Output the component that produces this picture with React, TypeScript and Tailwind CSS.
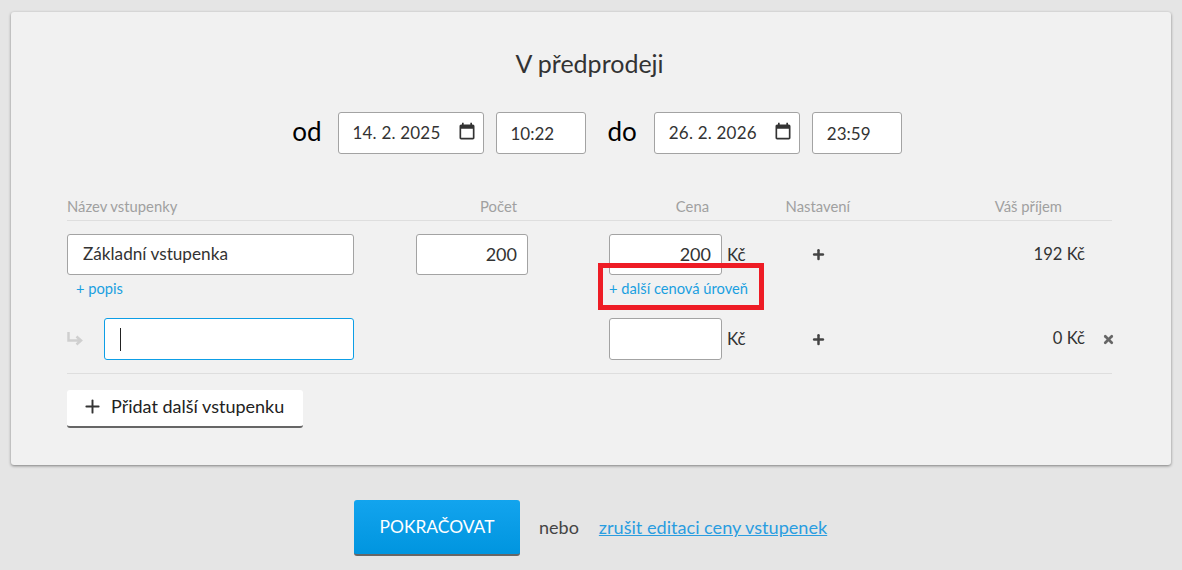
import { Plus, X } from 'lucide-react';

const inputCls =
  'rounded-[3px] border border-[#a3a3a3] bg-white text-[#333] outline-none';

function CalendarIcon() {
  return (
    <svg viewBox="0 0 24 24" className="h-[20px] w-[20px] fill-[#333]">
      <path d="M19 3h-1V1h-2v2H8V1H6v2H5c-1.11 0-1.99.9-1.99 2L3 19c0 1.1.89 2 2 2h14c1.1 0 2-.9 2-2V5c0-1.1-.9-2-2-2zm0 16H5V8h14v11z" />
    </svg>
  );
}

function DateField({ value }: { value: string }) {
  return (
    <div className={`${inputCls} flex h-[42px] w-[146px] shrink-0 items-center justify-between pl-[14px] pr-[6px] text-[17px] tracking-[0.2px]`}>
      <span>{value}</span>
      <span className="mb-[3px]">
        <CalendarIcon />
      </span>
    </div>
  );
}

function TimeField({ value }: { value: string }) {
  return <input readOnly value={value} className={`${inputCls} h-[42px] w-[90px] pl-[14px] text-[17px]`} />;
}

function SettingsPlus() {
  return <Plus className="h-[15px] w-[15px] text-[#444]" strokeWidth={4} />;
}

export default function App() {
  return (
    <div className="h-[570px] overflow-hidden bg-[#e5e5e5] px-[11px] pt-[12px] font-['Lato','Liberation_Sans',sans-serif] text-[#333]">
      <div className="h-[453px] rounded-[3px] bg-[#f1f1f1] pl-[56px] pr-[59px] pt-[35px] shadow-[0_1px_3px_rgba(0,0,0,0.45)]">
        <h1 className="text-center text-[25px] leading-[32px] text-[#333]">V předprodeji</h1>

        {/* datumy */}
        <div className="mt-[33px] flex h-[42px] items-center justify-center pl-[15px]">
          <span className="mb-[4px] mr-[16px] text-[26px] text-black">od</span>
          <DateField value="14. 2. 2025" />
          <div className="ml-[12px]">
            <TimeField value="10:22" />
          </div>
          <span className="mb-[4px] ml-[22px] mr-[17px] text-[26px] text-black">do</span>
          <DateField value="26. 2. 2026" />
          <div className="ml-[12px]">
            <TimeField value="23:59" />
          </div>
        </div>

        {/* hlavicka */}
        <div className="mt-[43px] flex h-[24px] items-start border-b border-[#dedede] text-[14.8px] leading-[18px] text-[#a0a0a0]">
          <span className="w-[349px]">Název vstupenky</span>
          <span className="w-[101px] text-right">Počet</span>
          <span className="w-[192px] text-right">Cena</span>
          <span className="w-[141px] text-right">Nastavení</span>
          <span className="w-[212px] text-right">Váš příjem</span>
        </div>

        {/* radek 1 */}
        <div className="mt-[13px] flex h-[41px] items-center">
          <input
            readOnly
            value="Základní vstupenka"
            className={`${inputCls} h-[41px] w-[287px] shrink-0 pb-[3px] pl-[15px] text-[17.2px]`}
          />
          <input
            readOnly
            value="200"
            className={`${inputCls} ml-[62px] h-[41px] w-[112px] shrink-0 pb-[2px] pr-[10px] text-right text-[18px]`}
          />
          <input
            readOnly
            value="200"
            className={`${inputCls} ml-[81px] h-[41px] w-[113px] shrink-0 pb-[2px] pr-[10px] text-right text-[18px]`}
          />
          <span className="ml-[5px] w-[20px] shrink-0 text-[17px]">Kč</span>
          <div className="ml-[64px] w-[15px] shrink-0">
            <SettingsPlus />
          </div>
          <span className="w-[259px] shrink-0 pb-[1px] text-right text-[16.6px]">192 Kč</span>
        </div>
        <div className="mt-[4px] flex h-[18px] items-center text-[14.7px] leading-[18px] text-[#1a9fe0]">
          <a className="ml-[9px] w-[533px]">+ popis</a>
          <a>+ další cenová úroveň</a>
        </div>

        {/* radek 2 */}
        <div className="mt-[21px] flex h-[42px] items-center">
          <svg viewBox="0 0 16 14" className="h-[14px] w-[16px] shrink-0 fill-none stroke-[#cfcfcf] stroke-[2.5]">
            <path d="M1.5 0v8.5h11M9.5 4.5l4.5 4-4.5 4" />
          </svg>
          <div className="ml-[21px] flex h-[42px] w-[250px] shrink-0 items-center rounded-[3px] border border-[#0d9ee6] bg-white pl-[15px]">
            <div className="h-[23px] w-px bg-[#222]" />
          </div>
          <input readOnly className={`${inputCls} ml-[255px] h-[42px] w-[113px] shrink-0`} />
          <span className="ml-[5px] w-[20px] shrink-0 text-[17px]">Kč</span>
          <div className="ml-[64px] w-[15px] shrink-0">
            <SettingsPlus />
          </div>
          <span className="w-[259px] shrink-0 pb-[1px] text-right text-[16.6px]">0 Kč</span>
          <X className="ml-[17px] h-[13px] w-[13px] shrink-0 text-[#666]" strokeWidth={5} />
        </div>

        <div className="mt-[13px] border-t border-[#dedede] pt-[16px]">
          <button className="flex h-[38px] w-[236px] items-center rounded-[3px] border-b-2 border-[#666] bg-white pb-[3px] pl-[15px] text-[18px] text-[#222]">
            <Plus className="mr-[8px] h-[21px] w-[21px] text-[#333]" strokeWidth={2.2} />
            Přidat další vstupenku
          </button>
        </div>
      </div>

      {/* akce */}
      <div className="mt-[35px] flex items-center pl-[343px] text-[18px]">
        <button className="h-[56px] w-[166px] rounded-[3px] border-b-2 border-[#666] bg-gradient-to-b from-[#12a4ee] to-[#0095df] text-[17.4px] text-white">
          POKRAČOVAT
        </button>
        <span className="ml-[19px] pb-[1px] text-[#444]">nebo</span>
        <a className="ml-[20px] pb-[1px] text-[18.1px] text-[#2a9de0] underline">zrušit editaci ceny vstupenek</a>
      </div>

      {/* cervene zvyrazneni */}
      <div className="absolute left-[598px] top-[263px] h-[47px] w-[166px] border-[5px] border-[#ee1c25]" />
    </div>
  );
}
